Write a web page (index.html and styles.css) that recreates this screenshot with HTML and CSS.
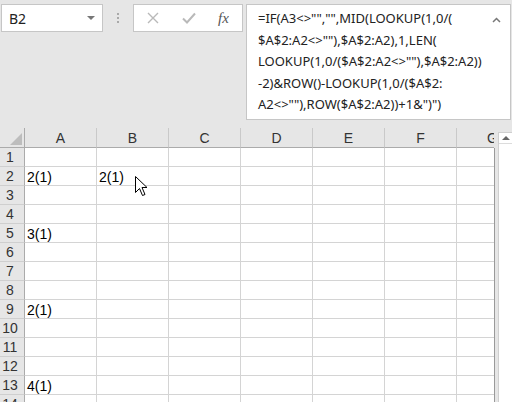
FILE: index.html
```html
<!DOCTYPE html>
<html>
<head>
    <title>Sheet</title>
    <link rel="stylesheet" href="styles.css">
</head>
<body>
    <div class="toolbar">
        <div class="namebox">
            <span>B2</span>
            <span class="drop"></span>
        </div>
        <div class="grip"><i></i><i></i><i></i></div>
        <div class="fxbox">
            <svg class="btn" width="12" height="12" viewBox="0 0 12 12"><path d="M1 1L11 11M11 1L1 11" stroke="#b9b9b9" stroke-width="1.4" fill="none"/></svg>
            <svg class="btn" width="14" height="12" viewBox="0 0 14 12"><path d="M1 6.5L5 10.5L13 1.5" stroke="#b9b9b9" stroke-width="2" fill="none"/></svg>
            <span class="fx">fx</span>
        </div>
        <div class="formula">
            <div>=IF(A3&lt;&gt;"","",MID(LOOKUP(1,0/(</div>
            <div>$A$2:A2&lt;&gt;""),$A$2:A2),1,LEN(</div>
            <div>LOOKUP(1,0/($A$2:A2&lt;&gt;""),$A$2:A2))</div>
            <div>-2)&amp;ROW()-LOOKUP(1,0/($A$2:</div>
            <div>A2&lt;&gt;""),ROW($A$2:A2))+1&amp;")")</div>
            <svg class="collapse" width="9" height="6" viewBox="0 0 9 6"><path d="M1 5L4.5 1.5L8 5" stroke="#777" stroke-width="1.5" fill="none"/></svg>
        </div>
    </div>

    <div class="sheet-area">
        <div class="sheet">
            <div class="row head">
                <div class="corner"><span class="tri"></span></div>
                <div>A</div><div>B</div><div>C</div><div>D</div><div>E</div><div>F</div><div>G</div>
            </div>
            <div class="row"><div class="num">1</div><div></div><div></div><div></div><div></div><div></div><div></div><div></div></div>
            <div class="row"><div class="num">2</div><div>2(1)</div><div>2(1)</div><div></div><div></div><div></div><div></div><div></div></div>
            <div class="row"><div class="num">3</div><div></div><div></div><div></div><div></div><div></div><div></div><div></div></div>
            <div class="row"><div class="num">4</div><div></div><div></div><div></div><div></div><div></div><div></div><div></div></div>
            <div class="row"><div class="num">5</div><div>3(1)</div><div></div><div></div><div></div><div></div><div></div><div></div></div>
            <div class="row"><div class="num">6</div><div></div><div></div><div></div><div></div><div></div><div></div><div></div></div>
            <div class="row"><div class="num">7</div><div></div><div></div><div></div><div></div><div></div><div></div><div></div></div>
            <div class="row"><div class="num">8</div><div></div><div></div><div></div><div></div><div></div><div></div><div></div></div>
            <div class="row"><div class="num">9</div><div>2(1)</div><div></div><div></div><div></div><div></div><div></div><div></div></div>
            <div class="row"><div class="num">10</div><div></div><div></div><div></div><div></div><div></div><div></div><div></div></div>
            <div class="row"><div class="num">11</div><div></div><div></div><div></div><div></div><div></div><div></div><div></div></div>
            <div class="row"><div class="num">12</div><div></div><div></div><div></div><div></div><div></div><div></div><div></div></div>
            <div class="row"><div class="num">13</div><div>4(1)</div><div></div><div></div><div></div><div></div><div></div><div></div></div>
            <div class="row"><div class="num">14</div><div></div><div></div><div></div><div></div><div></div><div></div><div></div></div>
        </div>
        <div class="vscroll">
            <div class="track">
                <div class="up"></div>
            </div>
        </div>
    </div>

    <svg class="pointer" width="13" height="21" viewBox="0 0 13 21">
        <path d="M0.5 0.5L0.5 16.5L4.5 12.5L7.5 19.5L10 18.5L7 11.5L12 11.5Z" fill="#fff" stroke="#000" stroke-width="1" stroke-linejoin="round"/>
    </svg>
</body>
</html>
```

FILE: styles.css
```css
body {
    margin: 0;
    width: 512px;
    height: 402px;
    overflow: hidden;
    background-color: #e6e6e6;
    font-family: "Noto Sans", sans-serif;
    position: relative;
}

.toolbar {
    display: flex;
    align-items: flex-start;
    height: 128px;
    padding-top: 4px;
    box-sizing: border-box;
}

.namebox {
    margin-left: 1px;
    width: 102px;
    height: 28px;
    box-sizing: border-box;
    background-color: #fff;
    border: 1px solid #c6c6c6;
    display: flex;
    align-items: center;
    justify-content: space-between;
    padding: 0 7px 0 7px;
    font-size: 14px;
    color: #222;
}

.drop {
    width: 0;
    height: 0;
    border-left: 4px solid transparent;
    border-right: 4px solid transparent;
    border-top: 4px solid #777;
}

.grip {
    width: 30px;
    height: 28px;
    display: flex;
    flex-direction: column;
    align-items: center;
    justify-content: center;
    gap: 2px;
}

.grip i {
    width: 2px;
    height: 2px;
    background-color: #a9a9a9;
}

.fxbox {
    width: 110px;
    height: 28px;
    box-sizing: border-box;
    background-color: #fff;
    border: 1px solid #c6c6c6;
    display: flex;
    align-items: center;
    padding-left: 13px;
}

.fxbox .btn:first-child {
    margin-right: 23px;
}

.fxbox .btn:nth-child(2) {
    margin-right: 22px;
}

.fx {
    font-family: "Liberation Serif", serif;
    font-style: italic;
    font-size: 15px;
    color: #555;
}

.formula {
    margin-left: 3px;
    width: 265px;
    height: 116px;
    box-sizing: border-box;
    background-color: #fff;
    border: 1px solid #c6c6c6;
    padding: 3px 0 0 11px;
    font-size: 13px;
    line-height: 21.5px;
    color: #222;
    position: relative;
}

.collapse {
    position: absolute;
    right: 9px;
    top: 12px;
}

.sheet-area {
    display: flex;
}

.sheet {
    width: 494px;
    height: 274px;
    overflow: hidden;
}

.row {
    display: grid;
    grid-template-columns: 25px repeat(7, 72px);
    height: 19px;
}

.row div {
    box-sizing: border-box;
    background-color: #fff;
    border-right: 1px solid #d4d4d4;
    border-bottom: 1px solid #d4d4d4;
    font-family: "Liberation Sans", sans-serif;
    font-size: 14px;
    line-height: 16px;
    padding: 2px 0 0 2px;
    white-space: nowrap;
    color: #000;
}

.row .num {
    background-color: #e6e6e6;
    border-right-color: #ababab;
    border-bottom-color: #cfcfcf;
    text-align: center;
    padding: 1px 4px 0 0;
    color: #333;
}

.head {
    height: 20px;
}

.head div {
    background-color: #e6e6e6;
    border-right-color: #c9c9c9;
    border-bottom-color: #ababab;
    text-align: center;
    padding: 2px 0 0 0;
    color: #333;
}

.head .corner {
    border-right-color: #ababab;
    position: relative;
}

.tri {
    position: absolute;
    right: 2px;
    bottom: 2px;
    width: 0;
    height: 0;
    border-left: 12px solid transparent;
    border-bottom: 12px solid #bdbdbd;
}

.vscroll {
    width: 18px;
    height: 274px;
    position: relative;
}

.vscroll::before {
    content: "";
    position: absolute;
    left: 0;
    top: 20px;
    bottom: 0;
    width: 1px;
    background-color: #9a9a9a;
}

.track {
    margin: 4px 0 0 4px;
    height: 270px;
    background-color: #fff;
    border-left: 1px solid #cfcfcf;
    border-top: 1px solid #cfcfcf;
}

.up {
    height: 10px;
    border-bottom: 1px solid #dcdcdc;
    display: flex;
    justify-content: center;
    align-items: center;
}

.up::before {
    content: "";
    border-left: 4px solid transparent;
    border-right: 4px solid transparent;
    border-bottom: 4px solid #666;
}

.pointer {
    position: absolute;
    left: 135px;
    top: 176px;
}
```
